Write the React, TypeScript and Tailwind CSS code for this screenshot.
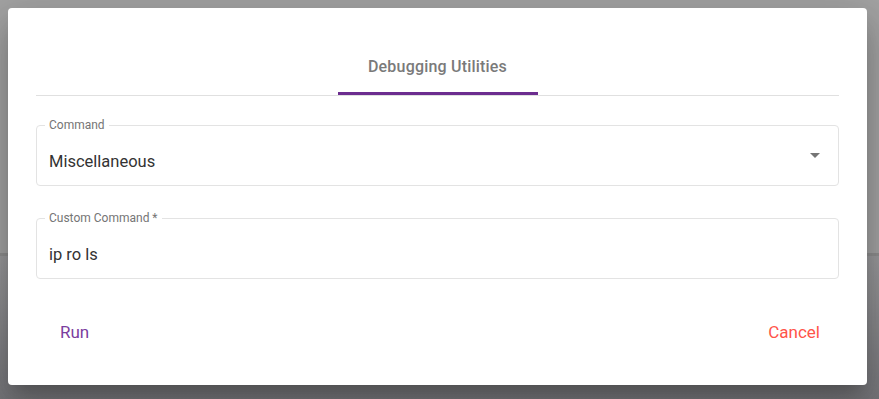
import React, { useState } from 'react';

const font = { fontFamily: 'Roboto, "Liberation Sans", sans-serif' };

const OutlinedField: React.FC<{ label: string; children: React.ReactNode; select?: boolean }> = ({
  label,
  children,
  select,
}) => {
  return (
    <div className="relative h-[61px] rounded-[4px] border border-[#e3e3e3] flex items-center pl-[12px] pr-[18px] pt-[12px]">
      <span className="absolute -top-[8px] left-[8px] px-[4px] bg-white text-[12px] leading-[14px] text-[#757575]">
        {label}
      </span>
      <div className="flex-1 text-[16.5px] leading-[20px] text-[#333333]">{children}</div>
      {select && (
        <svg width="10" height="5" viewBox="0 0 10 5" className="-mt-[12px]">
          <path d="M0 0 L10 0 L5 5 Z" fill="#757575" />
        </svg>
      )}
    </div>
  );
};

const App: React.FC = () => {
  const [command] = useState('Miscellaneous');
  const [custom] = useState('ip ro ls');

  return (
    <div className="relative w-[879px] h-[399px] overflow-hidden bg-[#9c9c9c]" style={font}>
      {/* 背景頁面 */}
      <div className="flex flex-col h-full">
        <div className="h-[253px] bg-[#a3a3a3]" />
        <div className="h-[3px] bg-[#8e8e8e]" />
        <div className="flex-1 bg-gradient-to-b from-[#9a9a9c] to-[#76767a]" />
      </div>

      {/* 對話框 */}
      <div className="absolute left-[8px] top-[8px] w-[859px] h-[377px] bg-white rounded-[4px] shadow-[0_11px_15px_-7px_rgba(0,0,0,0.2),0_24px_38px_3px_rgba(0,0,0,0.14),0_9px_46px_8px_rgba(0,0,0,0.12)] px-[28px] pt-[34px]">
        <div className="border-b border-[#e0e0e0] flex justify-center">
          <div className="w-[200px] flex flex-col items-center">
            <div className="h-[50px] flex items-center text-[16px] font-medium tracking-[0.2px] text-[#7a7a7a]">
              Debugging Utilities
            </div>
            <div className="w-full h-[3px] bg-[#6c2d8f]" />
          </div>
        </div>

        <div className="mt-[29px] flex flex-col gap-[32px]">
          <OutlinedField label="Command" select>
            {command}
          </OutlinedField>
          <OutlinedField label="Custom Command *">{custom}</OutlinedField>
        </div>

        <div className="mt-[41px] flex justify-between pl-[24px] pr-[19px] text-[17px]">
          <button className="text-[#7b3d9e]">Run</button>
          <button className="text-[#ff5449]">Cancel</button>
        </div>
      </div>
    </div>
  );
};

export default App;
